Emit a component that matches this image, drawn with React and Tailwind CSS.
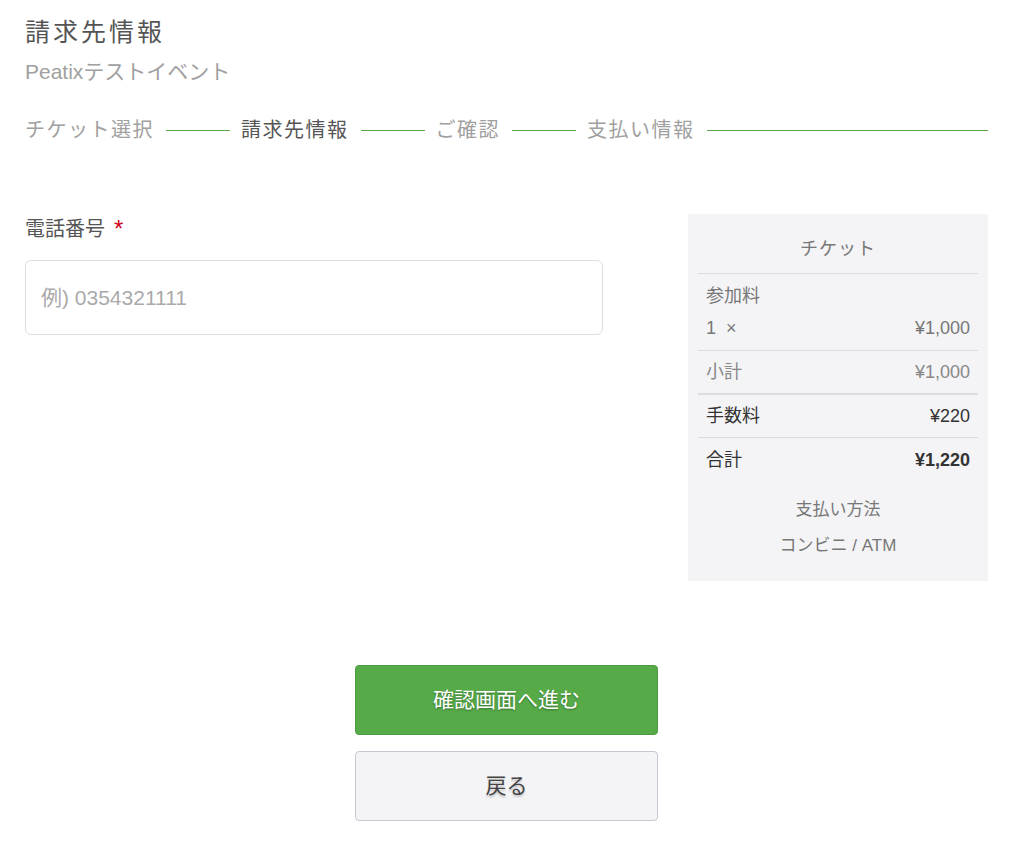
import React from "react";

const font = { fontFamily: '"Liberation Sans", "Noto Sans CJK JP", sans-serif' };

const steps = ["チケット選択", "請求先情報", "ご確認", "支払い情報"];

const Steps = () => {
  return (
    <div className="flex items-center h-[28px] mt-[30px] text-[20px] tracking-[1.5px]">
      {steps.map((s, i) => (
        <React.Fragment key={s}>
          <span className={i === 1 ? "text-[#555]" : "text-[#a0a0a0]"}>{s}</span>
          <div className={i === steps.length - 1 ? "flex-1 h-px bg-[#5aa84b] ml-[12px]" : "w-[64px] h-px bg-[#5aa84b] ml-[12px] mr-[11px]"} />
        </React.Fragment>
      ))}
    </div>
  );
};

const Summary = () => {
  return (
    <div className="w-[300px] bg-[#f4f4f6] px-[10px] pb-[22px] text-[18px]">
      <div className="pt-[22px] pb-[11px] leading-[26px] text-center text-[#777] tracking-[1px] border-b border-[#dcdcdf]">
        チケット
      </div>
      <div className="px-[8px] pt-[9px] pb-[9px] text-[#777] border-b border-[#dcdcdf]">
        <div className="leading-[26px]">参加料</div>
        <div className="flex justify-between leading-[26px] mt-[6px]">
          <span>1 &nbsp;×</span>
          <span>¥1,000</span>
        </div>
      </div>
      <div className="px-[8px] h-[44px] flex items-center justify-between text-[#888] border-b-2 border-[#dcdcdf]">
        <span>小計</span>
        <span>¥1,000</span>
      </div>
      <div className="px-[8px] h-[43px] flex items-center justify-between text-[#333] border-b border-[#dcdcdf]">
        <span>手数料</span>
        <span>¥220</span>
      </div>
      <div className="px-[8px] h-[45px] flex items-center justify-between text-[#333]">
        <span>合計</span>
        <span className="font-bold">¥1,220</span>
      </div>
      <div className="mt-[14px] leading-[26px] text-center text-[17px] text-[#777]">支払い方法</div>
      <div className="mt-[10px] leading-[26px] text-center text-[17px] text-[#777]">コンビニ / ATM</div>
    </div>
  );
};

const App = () => {
  return (
    <div className="bg-white min-h-[846px]" style={font}>
      <div className="w-[963px] ml-[25px] pt-[14px] pb-[24px]">
        <h1 className="text-[25px] leading-[36px] tracking-[3px] text-[#555]">請求先情報</h1>
        <div className="mt-[8px] text-[21px] leading-[28px] text-[#a0a0a0]">Peatixテストイベント</div>
        <Steps />
        <div className="flex justify-between items-start mt-[70px]">
          <div className="pt-[1px]">
            <label className="flex items-center text-[20px] leading-[28px] text-[#555]">
              電話番号
              <span className="ml-[9px] text-[24px] leading-none text-[#d0021b]">*</span>
            </label>
            <input
              type="text"
              placeholder="例) 0354321111"
              className="mt-[17px] w-[578px] h-[75px] px-[15px] rounded-[6px] border border-[#dedede] bg-white text-[21px] text-[#333] placeholder:text-[#aaa] outline-none"
            />
          </div>
          <Summary />
        </div>
        <div className="w-[303px] mx-auto mt-[84px] flex flex-col gap-[16px]">
          <button className="h-[70px] rounded-[4px] bg-[#56aa48] border border-[#4b9b3f] text-white text-[21px] [text-shadow:0_1px_2px_rgba(0,0,0,0.35)]">
            確認画面へ進む
          </button>
          <button className="h-[70px] rounded-[4px] bg-[#f4f4f6] border border-[#c8c8d2] text-[#444] text-[21px] [text-shadow:0_2px_2px_rgba(0,0,0,0.2)]">
            戻る
          </button>
        </div>
      </div>
    </div>
  );
};

export default App;
